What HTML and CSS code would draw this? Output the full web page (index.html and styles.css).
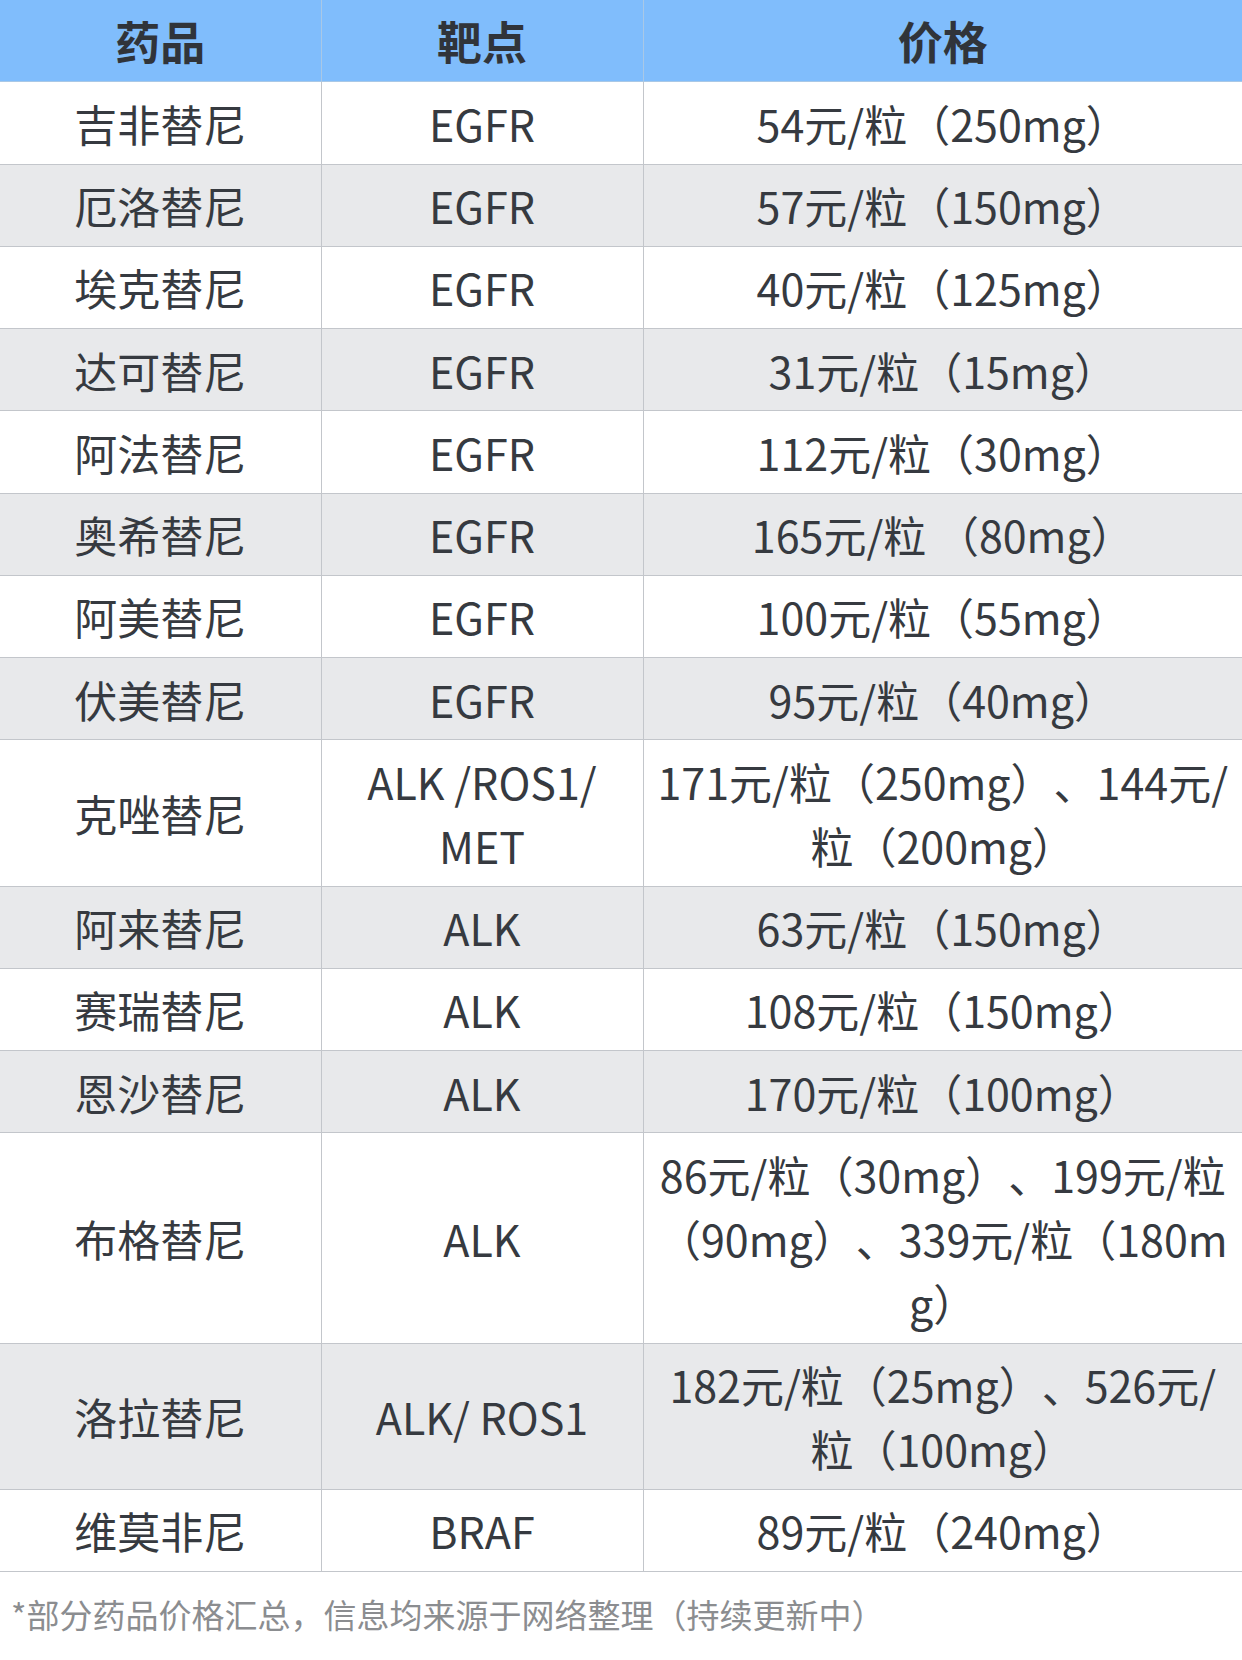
FILE: index.html
```html
<!DOCTYPE html>
<html lang="zh-CN">
<head>
<meta charset="utf-8">
<title>部分药品价格汇总</title>
<link rel="stylesheet" href="styles.css">
</head>
<body>
<table class="price-table">
  <colgroup>
    <col class="col-drug">
    <col class="col-target">
    <col class="col-price">
  </colgroup>
  <thead>
    <tr><th>药品</th><th>靶点</th><th>价格</th></tr>
  </thead>
  <tbody>
    <tr><td>吉非替尼</td><td>EGFR</td><td>54元/粒（250mg）</td></tr>
    <tr><td>厄洛替尼</td><td>EGFR</td><td>57元/粒（150mg）</td></tr>
    <tr><td>埃克替尼</td><td>EGFR</td><td>40元/粒（125mg）</td></tr>
    <tr><td>达可替尼</td><td>EGFR</td><td>31元/粒（15mg）</td></tr>
    <tr><td>阿法替尼</td><td>EGFR</td><td>112元/粒（30mg）</td></tr>
    <tr><td>奥希替尼</td><td>EGFR</td><td>165元/粒 （80mg）</td></tr>
    <tr><td>阿美替尼</td><td>EGFR</td><td>100元/粒（55mg）</td></tr>
    <tr><td>伏美替尼</td><td>EGFR</td><td>95元/粒（40mg）</td></tr>
    <tr><td>克唑替尼</td><td>ALK /ROS1/ MET</td><td>171元/粒（250mg）、144元/粒（200mg）</td></tr>
    <tr><td>阿来替尼</td><td>ALK</td><td>63元/粒（150mg）</td></tr>
    <tr><td>赛瑞替尼</td><td>ALK</td><td>108元/粒（150mg）</td></tr>
    <tr><td>恩沙替尼</td><td>ALK</td><td>170元/粒（100mg）</td></tr>
    <tr><td>布格替尼</td><td>ALK</td><td class="breakall">86元/粒（30mg）、199元/粒（90mg）、339元/粒（180mg）</td></tr>
    <tr><td>洛拉替尼</td><td>ALK/ ROS1</td><td>182元/粒（25mg）、526元/粒（100mg）</td></tr>
    <tr><td>维莫非尼</td><td>BRAF</td><td>89元/粒（240mg）</td></tr>
  </tbody>
</table>
<p class="note">*部分药品价格汇总，信息均来源于网络整理（持续更新中）</p>
</body>
</html>
```

FILE: styles.css
```css
html, body {
  margin: 0;
  padding: 0;
  background: #ffffff;
}

body {
  font-family: "Noto Sans CJK SC", "Noto Sans", sans-serif;
  color: #363a40;
  width: 1242px;
  text-spacing-trim: space-all;
}

.price-table {
  width: 1242px;
  border-collapse: collapse;
  table-layout: fixed;
}

.col-drug { width: 321px; }
.col-target { width: 322px; }
.col-price { width: 599px; }

.price-table th,
.price-table td {
  text-align: center;
  vertical-align: middle;
  font-size: 43px;
  line-height: 64px;
  padding: 8.625px 12px;
  border: 1px solid #c3c6cb;
}

.price-table thead th {
  background: #80bdfc;
  font-weight: 700;
  font-size: 45px;
  color: #30343a;
  border-top: none;
  border-color: #a9c8e6;
  border-bottom-color: #a9c8e6;
}

.price-table th:first-child,
.price-table td:first-child {
  border-left: none;
}

.price-table th:last-child,
.price-table td:last-child {
  border-right: none;
}

.price-table tbody tr:nth-child(even) td {
  background: #e8e9eb;
}

.price-table td.breakall {
  word-break: break-all;
}

.note {
  margin: 22px 0 0 11px;
  font-size: 33px;
  line-height: 40px;
  color: #8b8d90;
}
```
